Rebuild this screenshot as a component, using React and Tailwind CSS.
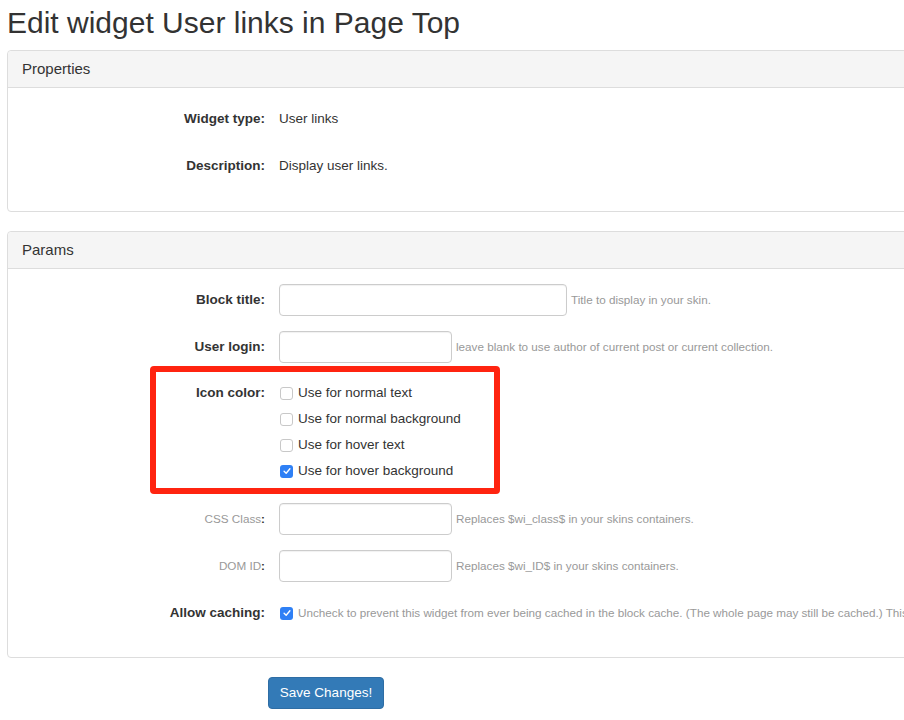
const font = { fontFamily: '"Liberation Sans", Arial, sans-serif' };

function Box({ checked }) {
  if (checked) {
    return (
      <span className="flex h-[13px] w-[13px] shrink-0 items-center justify-center rounded-[3px] bg-[#2f80f5]">
        <svg viewBox="0 0 12 12" className="h-[10px] w-[10px]">
          <path d="M2.5 6.3 L5 8.7 L9.5 3.3" fill="none" stroke="white" strokeWidth="1.6" strokeLinecap="round" strokeLinejoin="round" />
        </svg>
      </span>
    );
  }
  return <span className="h-[13px] w-[13px] shrink-0 rounded-[3px] border border-[#c8c8c8] bg-white" />;
}

function Row({ label, muted, children, className = "mb-[15px]" }) {
  return (
    <div className={`flex ${className}`}>
      <div className="w-[257px] shrink-0 text-right">
        <div className="flex h-[32px] items-center justify-end text-[13.5px]">
          {muted ? (
            <span className="text-[11.7px] text-[#999]">
              {label}
              <b className="text-[#333]">:</b>
            </span>
          ) : (
            <span className="font-bold text-[#333]">{label}:</span>
          )}
        </div>
      </div>
      <div className="ml-[14px] flex-1">{children}</div>
    </div>
  );
}

function Input({ w, hint }) {
  return (
    <div className="flex h-[32px] items-center">
      <div className={`h-[32px] ${w} rounded-[4px] border border-[#ccc] bg-white shadow-[inset_0_1px_1px_rgba(0,0,0,0.06)]`} />
      <span className="ml-[4px] whitespace-nowrap text-[11.7px] text-[#999]">{hint}</span>
    </div>
  );
}

function Panel({ title, children }) {
  return (
    <div className="w-[1000px] rounded-[4px] border border-[#ddd] bg-white">
      <div className="flex h-[37px] items-center rounded-t-[4px] border-b border-[#ddd] bg-[#f5f5f5] px-[14px] text-[15px] text-[#333]">
        {title}
      </div>
      <div className="pt-[15px] pb-[14px]">{children}</div>
    </div>
  );
}

export default function App() {
  const opts = [
    ["Use for normal text", false],
    ["Use for normal background", false],
    ["Use for hover text", false],
    ["Use for hover background", true],
  ];
  return (
    <div className="h-[720px] w-[904px] overflow-hidden bg-white text-[#333]" style={font}>
      <h1 className="pl-[7px] pt-[5px] text-[30px] leading-[36px] text-[#333]">
        Edit widget User links in Page Top
      </h1>
      <div className="pl-[7px] pt-[9px]">
        <Panel title="Properties">
          <Row label="Widget type">
            <div className="flex h-[32px] items-center text-[13.5px]">User links</div>
          </Row>
          <Row label="Description">
            <div className="flex h-[32px] items-center text-[13.5px]">Display user links.</div>
          </Row>
        </Panel>
        <div className="h-[19px]" />
        <Panel title="Params">
          <Row label="Block title">
            <Input w="w-[288px]" hint="Title to display in your skin." />
          </Row>
          <Row label="User login">
            <Input w="w-[173px]" hint="leave blank to use author of current post or current collection." />
          </Row>
          <div className="relative">
            <div className="mb-[15px] flex">
              <div className="w-[257px] shrink-0 pt-[5px] text-right text-[13.5px] font-bold">Icon color:</div>
              <div className="ml-[14px] flex flex-col pt-[2px] pb-[4px]">
                {opts.map(([t, c]) => (
                  <div key={t} className="flex h-[26px] items-center gap-[5px] pl-[1px] text-[13.5px] text-[#333]">
                    <Box checked={c} />
                    <span>{t}</span>
                  </div>
                ))}
              </div>
            </div>
            <div className="pointer-events-none absolute left-[142px] top-[-12px] h-[128px] w-[350px] rounded-[4px] border-[6px] border-[#ff2410]" />
          </div>
          <Row label="CSS Class" muted>
            <Input w="w-[173px]" hint="Replaces $wi_class$ in your skins containers." />
          </Row>
          <Row label="DOM ID" muted>
            <Input w="w-[173px]" hint="Replaces $wi_ID$ in your skins containers." />
          </Row>
          <Row label="Allow caching" className="mb-[14px]">
            <div className="flex h-[32px] items-center gap-[5px] pl-[1px]">
              <Box checked />
              <span className="whitespace-nowrap text-[11.7px] text-[#999]">
                Uncheck to prevent this widget from ever being cached in the block cache. (The whole page may still be cached.) This
              </span>
            </div>
          </Row>
        </Panel>
        <div className="pl-[261px] pt-[19px]">
          <button className="h-[32px] w-[116px] rounded-[4px] border border-[#2e6da4] bg-[#337ab7] text-[13.5px] text-white">
            Save Changes!
          </button>
        </div>
      </div>
    </div>
  );
}
